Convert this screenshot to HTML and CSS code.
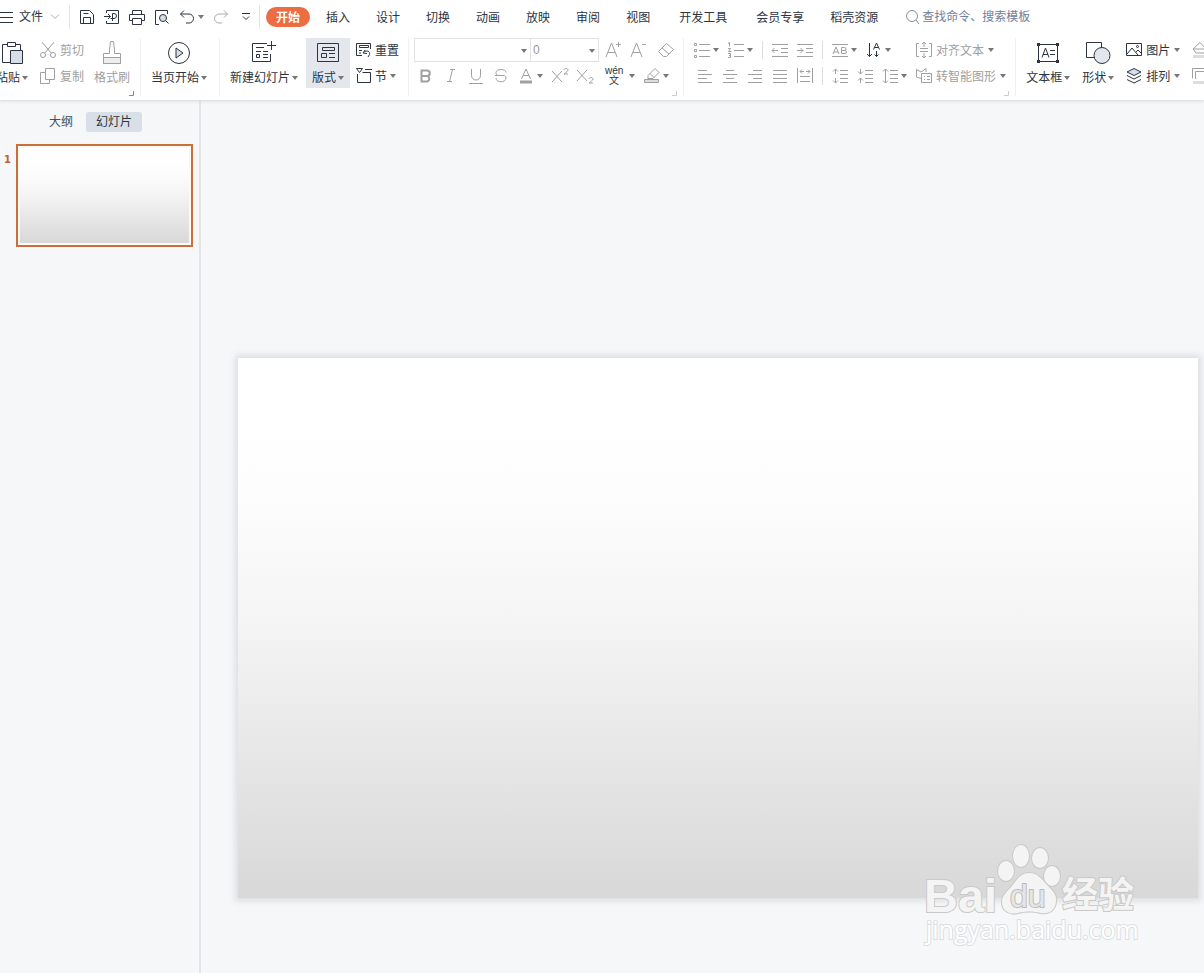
FILE: index.html
```
<!DOCTYPE html>
<html lang="zh-CN">
<head>
    <meta charset="UTF-8">
    <title>演示文稿</title>
    <link rel="stylesheet" href="styles.css">
</head>
<body>
    <!-- shared shapes -->
    <svg class="defs" width="0" height="0">
        <symbol id="caret" viewBox="0 0 6 4"><path d="M0 0h6L3 4z" fill="#777" stroke="none"/></symbol>
    </svg>

    <header>
        <nav class="menubar">
            <button class="file" aria-label="文件">
                <svg width="13" height="12"><path d="M0 1.5h13M0 6.500h13M0 11.500h13"/></svg>
                文件
                <svg class="light chev" width="10" height="6"><path d="M1 .5l4 4 4-4"/></svg>
            </button>
            <div class="quick">
                <button aria-label="保存"><svg width="16" height="16"><path d="M1.500 1.500h9l4 4v9h-13zM4.500 14.500v-6h7v6M4.500 4.500h5"/></svg></button>
                <button aria-label="输出为PDF"><svg width="16" height="16"><path d="M2.500 4V1.500h12v13h-12V12M0 7.500h6M4 5l2.500 2.500L4 10M8.500 12V4.500H10a2 2 0 0 1 0 5H6.500"/></svg></button>
                <button aria-label="打印"><svg width="16" height="16"><path d="M3.500 5V1.500h9V5M3.500 11.500h-3v-6h15v6h-3M3.500 9.500h9v6h-9z"/></svg></button>
                <button aria-label="打印预览"><svg width="16" height="16"><path d="M5 15.500H1.500v-14h12V5M11.500 11.500l3 3"/><circle cx="9" cy="9" r="3.500" fill="#d8dee6"/></svg></button>
                <button aria-label="撤销"><svg width="16" height="16"><path d="M5 1.500L1.500 5 5 8.500M1.500 5H10a4.500 4.500 0 0 1 0 9H7"/></svg><svg class="caret"><use href="#caret"/></svg></button>
                <button class="redo" aria-label="恢复"><svg class="light" width="16" height="16"><path d="M11 1.500L14.500 5 11 8.500M14.500 5H6a4.500 4.500 0 0 0 0 9h3"/></svg></button>
                <button class="more" aria-label="更多"><svg width="8" height="8"><path d="M0 .5h8M1 3.500l3 3 3-3"/></svg></button>
            </div>
            <div class="tabs">
                <button class="tab active">开始</button>
                <button class="tab">插入</button>
                <button class="tab">设计</button>
                <button class="tab">切换</button>
                <button class="tab">动画</button>
                <button class="tab">放映</button>
                <button class="tab">审阅</button>
                <button class="tab">视图</button>
                <button class="tab wide">开发工具</button>
                <button class="tab">会员专享</button>
                <button class="tab">稻壳资源</button>
            </div>
            <label class="search">
                <svg width="16" height="16"><circle cx="7" cy="7" r="5.500"/><path d="M11 11l3 4"/></svg>
                <input type="text" placeholder="查找命令、搜索模板">
            </label>
        </nav>

        <div class="ribbon">
            <div class="group clipboard">
                <button class="big">
                    <svg width="24" height="24"><path d="M8 3.500H2.500v18H10M16 3.500h4.500V9M7.500 1.500h8v4h-8z"/><path d="M10.500 9.500h12v13h-12z" fill="#d8dee6"/></svg>
                    <span>粘贴<svg class="caret"><use href="#caret"/></svg></span>
                </button>
                <div class="col">
                    <button class="small off"><svg width="16" height="16"><path d="M2 0l9.500 11.500M14 0L4.500 11.500"/><circle cx="3" cy="13" r="2.500"/><circle cx="13" cy="13" r="2.500"/></svg><span>剪切</span></button>
                    <button class="small off"><svg width="16" height="16"><path d="M5.500.5h9v11h-9zM5 4.500H.5v11h9V12"/></svg><span>复制</span></button>
                </div>
                <button class="big off brush">
                    <svg width="24" height="24"><path d="M3.500 22.500v-10h6v-4l1-8h3l1 8v4h6v10z"/><path d="M3.500 16.500h17v6h-17z" fill="#eee"/></svg>
                    <span>格式刷</span>
                </button>
                <svg class="corner" width="5" height="5"><path d="M4.500 0v4.500H0"/></svg>
            </div>

            <div class="group play">
                <button class="big">
                    <svg width="24" height="24"><circle cx="12" cy="12" r="10.500"/><path d="M9 7l7 5-7 5z" fill="#d8dee6"/></svg>
                    <span>当页开始<svg class="caret"><use href="#caret"/></svg></span>
                </button>
            </div>

            <div class="group slides">
                <button class="big">
                    <svg width="24" height="24"><path d="M15 2.500H.5v18h18V13M19.500 0v9M15 4.500h9M4 6.500h8M4 10.500h5M4.500 13.500h3v3h-3zM11 10.500h5M11 13.500h5M11 16.500h5"/></svg>
                    <span>新建幻灯片<svg class="caret"><use href="#caret"/></svg></span>
                </button>
                <button class="big on">
                    <svg width="24" height="24"><path d="M1.500 2.500h21v18h-21zM6.500 6.500h12v3h-12zM5.500 12.500h5v4h-5zM13 12.500h6M13 16.500h6"/></svg>
                    <span>版式<svg class="caret"><use href="#caret"/></svg></span>
                </button>
                <div class="col tight">
                    <button class="small"><svg width="16" height="16"><path d="M6 13.500H.5v-12h14V7M3.500 3.500h9v2h-9zM3 8.500h3M3 11h2M9 8l-2 3 4 .5M7.500 10.500c3-3 7-1 6 2L12 15"/></svg><span>重置</span></button>
                    <button class="small"><svg width="16" height="16"><path d="M.5.500h6l-3 4zM9 1.500h7M1.500 6v8.500h13v-10h-8"/></svg><span>节</span><svg class="caret"><use href="#caret"/></svg></button>
                </div>
            </div>

            <div class="group font">
                <div class="col">
                    <div class="row combos">
                        <label class="combo name"><select aria-label="字体"><option></option></select><svg class="caret"><use href="#caret"/></svg></label>
                        <label class="combo size"><select aria-label="字号"><option>0</option></select><svg class="caret"><use href="#caret"/></svg></label>
                        <button class="off grow" aria-label="增大字号"><svg width="16" height="16"><path d="M0 15L5.500 1 11 15M2 10.500h7M10 2.500h5M12.500 0v5"/></svg></button>
                        <button class="off" aria-label="减小字号"><svg width="16" height="16"><path d="M0 15L5.500 1 11 15M2 10.500h7M11 2.500h4"/></svg></button>
                        <button class="off erase" aria-label="清除格式"><svg width="16" height="16"><path d="M.5 9.500l8-8 7 6-7 7h-3zM4 6l7 6"/></svg></button>
                    </div>
                    <div class="row styles">
                        <button class="off" aria-label="加粗"><svg width="16" height="16"><path d="M3.500 2.500H9a2.700 2.700 0 0 1 0 5.500H3.500zM3.500 8h6a3 3 0 0 1 0 5.500h-6z" stroke-width="2"/></svg></button>
                        <button class="off" aria-label="倾斜"><svg width="16" height="16"><path d="M7 1.500h5M4 13.500h5M9.500 1.500l-3 12"/></svg></button>
                        <button class="off" aria-label="下划线"><svg width="16" height="16"><path d="M3.500 1v6.500a4.500 4.500 0 0 0 9 0V1M1 15.500h14"/></svg></button>
                        <button class="off" aria-label="删除线"><svg width="16" height="16"><path d="M13 4.500c0-4-10-4-10 0 0 3 2 3 4 3M13 10c0 5-10 5-10 0M2 7.500h9c1 0 2 1 2 2.500"/></svg></button>
                        <button class="off" aria-label="字体颜色"><svg width="16" height="16"><path d="M3.500 11L8 1l4.500 10M5 7.500h6"/><path d="M2 14h12" stroke-width="3"/></svg><svg class="caret"><use href="#caret"/></svg></button>
                        <button class="off" aria-label="上标"><svg width="16" height="16"><path d="M0 3l10 11M10 3L0 14M12 2c0-2 4-2 4 0 0 1.500-2 2-4 4h4"/></svg></button>
                        <button class="off" aria-label="下标"><svg width="16" height="16"><path d="M0 2l10 11M10 2L0 13M12 11c0-2 4-2 4 0 0 1.500-2 2-4 4h4"/></svg></button>
                        <button class="pinyin" aria-label="拼音指南"><span>wén</span><span>文</span></button>
                        <svg class="caret"><use href="#caret"/></svg>
                        <button class="off" aria-label="突出显示"><svg width="16" height="16"><path d="M4 11V7.500l7-7 4 4-6 6H4M6 5.500l4 4"/><path d="M.5 11.500h14v3H.5z" fill="#ddd"/></svg><svg class="caret"><use href="#caret"/></svg></button>
                    </div>
                </div>
                <svg class="corner light" width="5" height="5"><path d="M4.500 0v4.500H0"/></svg>
            </div>

            <div class="group para">
                <div class="col">
                    <div class="row">
                        <button class="off" aria-label="项目符号"><svg width="16" height="16"><path d="M5 2.500h11M5 8.500h11M5 14.500h11M.5 1.500h2v2h-2zM.5 7.500h2v2h-2zM.5 13.500h2v2h-2z"/></svg><svg class="caret"><use href="#caret"/></svg></button>
                        <button class="off" aria-label="编号"><svg width="16" height="16"><path d="M6 2.500h10M6 8.500h10M6 14.500h10M0 1.500l1.500-1v4M0 6.500h2.500L.5 9.500h3M0 11.500h2.500v4H0M1 13.500h2"/></svg><svg class="caret"><use href="#caret"/></svg></button>
                        <i class="line"></i>
                        <button class="off" aria-label="减少缩进"><svg width="16" height="16"><path d="M0 2.500h16M9 6.500h7M9 10.500h7M0 14.500h16M0 8.500h6M2.500 6L0 8.500 2.500 11"/></svg></button>
                        <button class="off" aria-label="增加缩进"><svg width="16" height="16"><path d="M0 2.500h16M9 6.500h7M9 10.500h7M0 14.500h16M0 8.500h6M3.500 6L6 8.500 3.500 11"/></svg></button>
                    </div>
                    <div class="row aligns">
                        <button class="off" aria-label="左对齐"><svg width="16" height="16"><path d="M1 2.500h9M1 6.500h14M1 10.500h9M1 14.500h14"/></svg></button>
                        <button class="off" aria-label="居中"><svg width="16" height="16"><path d="M4 2.500h8M1 6.500h14M4 10.500h8M1 14.500h14"/></svg></button>
                        <button class="off" aria-label="右对齐"><svg width="16" height="16"><path d="M6 2.500h9M1 6.500h14M6 10.500h9M1 14.500h14"/></svg></button>
                        <button class="off" aria-label="两端对齐"><svg width="16" height="16"><path d="M1 2.500h14M1 6.500h14M1 10.500h14M1 14.500h14"/></svg></button>
                        <button class="off" aria-label="分散对齐"><svg width="16" height="16"><path d="M.5 0v15M15.500 0v15M3 8.500h10M3 13.500h10M3 3.500h4M9 3.500h4M5 1.500l-2 2 2 2M11 1.500l2 2-2 2"/></svg></button>
                    </div>
                </div>
                <div class="col lines">
                    <i class="line"></i>
                    <i class="line"></i>
                </div>
                <div class="col">
                    <div class="row">
                        <button class="off" aria-label="字符边框"><svg width="16" height="16"><path d="M0 2.500h16M0 14.500h16M1 12L4 5l3 7M2 10h4M9.500 5.500h3a1.500 1.500 0 0 1 0 3h-3zM9.500 8.500H13a1.500 1.500 0 0 1 0 3H9.500z"/></svg><svg class="caret"><use href="#caret"/></svg></button>
                        <button aria-label="文字方向"><svg width="16" height="16"><path d="M3.500 1v13.500M1 12l2.500 2.500L6 12M7.500 7.500L10.500 1l3 6.500M8.500 5.500h4M10.500 9v5.500M8.500 12.500l2 2 2-2"/></svg><svg class="caret"><use href="#caret"/></svg></button>
                    </div>
                    <div class="row">
                        <button class="off" aria-label="段前间距"><svg width="16" height="16"><path d="M8 2.500h8M8 6.500h8M8 10.500h8M8 14.500h8M3.500 6V1M1 3.500L3.500 1 6 3.500M3.500 10v5M1 12.500L3.500 15 6 12.500"/></svg></button>
                        <button class="off" aria-label="段后间距"><svg width="16" height="16"><path d="M8 2.500h8M8 6.500h8M8 10.500h8M8 14.500h8M3.500 1v5M1 3.500L3.500 6 6 3.500M3.500 15v-5M1 12.500L3.500 10 6 12.500"/></svg></button>
                        <button class="off" aria-label="行距"><svg width="16" height="16"><path d="M8 2.500h8M8 6.500h8M8 10.500h8M8 14.500h8M3.500 1v14M1 3.500L3.500 1 6 3.500M1 12.500L3.500 15 6 12.500"/></svg><svg class="caret"><use href="#caret"/></svg></button>
                    </div>
                </div>
                <div class="col last">
                    <button class="small off"><svg width="16" height="16"><path d="M3 1.500H.5v13H3M13 1.500h2.500v13H13M4 6.500h8M4 9.500h8M8 5V0M6 2l2-2 2 2M8 11v5M6 14l2 2 2-2"/></svg><span>对齐文本</span><svg class="caret"><use href="#caret"/></svg></button>
                    <button class="small off"><svg width="16" height="16"><path d="M5 10.500L.5 9V1.500L5 4l5-3.500V4M5.500 5.500h10v9h-10zM8 8.500h1M11 8.500h3M8 11.500h1M11 11.500h3"/></svg><span>转智能图形</span><svg class="caret"><use href="#caret"/></svg></button>
                </div>
                <svg class="corner light" width="5" height="5"><path d="M4.500 0v4.500H0"/></svg>
            </div>

            <div class="group insert">
                <button class="big">
                    <svg width="24" height="24"><path d="M2.500 3.500h19v17h-19zM6 16.500L9.500 7l3.500 9.500M7 13.500h5M14 9.500h5M14 13.500h5"/><path d="M1 2h3v3H1zM20 2h3v3h-3zM1 19h3v3H1zM20 19h3v3h-3z" fill="#2b3440" stroke="none"/></svg>
                    <span>文本框<svg class="caret"><use href="#caret"/></svg></span>
                </button>
                <button class="big">
                    <svg width="26" height="24"><path d="M1.500 1.500h15v15h-15z"/><circle cx="17" cy="14.500" r="8" fill="#e3e7ec"/></svg>
                    <span>形状<svg class="caret"><use href="#caret"/></svg></span>
                </button>
                <div class="col">
                    <button class="small"><svg width="16" height="16"><path d="M.5 1.500h15v12H.5zM1 12l5-6 6 7M10 10l2-2 3 3"/><circle cx="11.500" cy="4.500" r="1"/></svg><span>图片</span><svg class="caret"><use href="#caret"/></svg></button>
                    <button class="small"><svg width="16" height="16"><path d="M8 .5l7 3.500-7 3.500L1 4z" fill="#d8dee6"/><path d="M1 7.500L8 11l7-3.500M1 11.500L8 15l7-3.500"/></svg><span>排列</span><svg class="caret"><use href="#caret"/></svg></button>
                </div>
                <div class="col">
                    <button class="small off" aria-label="填充"><svg width="16" height="16"><path d="M1 7l7-6.500L14 7l-2 4H4zM1 7h13"/><path d="M1 14.500h14" stroke-width="3" stroke="#ddd"/></svg></button>
                    <button class="small off" aria-label="轮廓"><svg width="16" height="16"><path d="M.5 10.500V.5h15v10M3.500 11V3.500h9V11"/><path d="M1 14.500h14" stroke-width="3" stroke="#ddd"/></svg></button>
                </div>
            </div>
        </div>
    </header>

    <div class="workspace">
        <aside>
            <div class="views">
                <button class="view">大纲</button>
                <button class="view active">幻灯片</button>
            </div>
            <div class="thumb-row">
                <span class="num">1</span>
                <div class="thumb"><div class="paper"></div></div>
            </div>
        </aside>
        <main>
            <div class="slide paper"></div>
            <svg class="watermark" width="222" height="110" viewBox="0 0 222 110">
                <g class="brand">
                    <text class="bai" x="2" y="69">Bai</text>
                    <ellipse cx="84" cy="28" rx="8" ry="10"/>
                    <ellipse cx="99" cy="13" rx="8" ry="11"/>
                    <ellipse cx="118" cy="15" rx="8" ry="10"/>
                    <ellipse cx="130" cy="33" rx="8" ry="10"/>
                    <path d="M107 30c10 0 14 8 19 13 6 6 9 10 8 16-1 10-9 12-15 11-8-2-15-2-23 0-7 2-16-1-16-11 0-7 5-10 10-16 5-7 9-13 17-13z"/>
                    <text class="du" x="88" y="64">du</text>
                    <text class="cn" x="140" y="65">经验</text>
                </g>
                <text class="url" x="4" y="96">jingyan.baidu.com</text>
            </svg>
        </main>
    </div>
</body>
</html>
```
FILE: styles.css
```
* {
    box-sizing: border-box;
}
body {
    margin: 0;
    min-height: 100vh;
    display: flex;
    flex-direction: column;
    overflow: hidden;
    background-color: #f5f7f9;
    color: #2b3440;
    font-family: "Liberation Sans", "Noto Sans CJK SC", sans-serif;
    font-size: 12px;
    line-height: 16px;
}
.defs {
    position: absolute;
}
svg {
    display: block;
    flex: none;
    fill: none;
    stroke: #2b3440;
    overflow: visible;
}
.light {
    stroke: #aaa;
}
.caret {
    width: 6px;
    height: 4px;
}
button {
    display: flex;
    align-items: center;
    flex: none;
    padding: 0;
    border: none;
    background: none;
    color: inherit;
    font: inherit;
    white-space: nowrap;
    cursor: pointer;
}
.off {
    color: #a0a0a0;
}
.off svg {
    stroke: #a0a0a0;
}

/* menu bar */
header {
    position: relative;
    background-color: white;
    box-shadow: 0 1px 3px #d5d8dc;
}
.menubar {
    display: flex;
    align-items: center;
    height: 34px;
}
.file {
    gap: 6px;
    height: 24px;
    padding-right: 9px;
    border-right: 1px solid #e4e4e4;
}
.chev {
    margin-left: 1px;
}
.quick {
    display: flex;
    align-items: center;
    gap: 9px;
    height: 24px;
    padding: 0 9px;
    border-right: 1px solid #e4e4e4;
}
.quick .caret {
    margin-left: 3px;
}
.more {
    margin-left: 4px;
}
.tabs {
    display: flex;
    align-items: center;
    padding-left: 6px;
}
.tab {
    height: 20px;
    padding: 2px 13px 0;
}
.tab.active {
    margin-right: 3px;
    padding: 2px 10px 0;
    border-radius: 10px;
    background-color: #ed6c42;
    color: white;
    font-weight: bold;
}
.tab.wide {
    margin: 0 3px;
}
.search {
    display: flex;
    align-items: center;
    margin-left: 14px;
}
.search svg {
    stroke: #8290a3;
}
.search input {
    width: 130px;
    padding: 0 0 0 1px;
    border: none;
    outline: none;
    background: none;
    font: inherit;
}
.search input::placeholder {
    color: #71809a;
}

/* ribbon */
.ribbon {
    display: flex;
    padding: 4px 0;
}
.group {
    position: relative;
    display: flex;
    align-items: flex-start;
    flex: none;
    height: 58px;
    border-right: 1px solid #f0f0f0;
}
.big {
    flex-direction: column;
    gap: 5px;
    height: 50px;
    padding-top: 3px;
}
.big span {
    display: flex;
    align-items: center;
    gap: 2px;
}
.big.on {
    padding: 3px 6px 0;
    background-color: #e4e8ee;
}
.col {
    display: flex;
    flex-direction: column;
    gap: 2px;
}
.row {
    display: flex;
    align-items: center;
    gap: 9px;
    height: 24px;
}
.row button {
    gap: 3px;
}
.small {
    gap: 4px;
    height: 24px;
}
.small span {
    padding-top: 2px;
}
.corner {
    position: absolute;
    right: 6px;
    bottom: 0;
    stroke: #888;
}
.corner.light {
    stroke: #ccc;
}
.clipboard {
    gap: 12px;
    margin-left: -4px;
    padding-right: 10px;
}
.brush {
    margin-left: -2px;
}
.play {
    padding: 0 12px 0 10px;
}
.slides {
    gap: 8px;
    padding: 0 9px 0 10px;
}
.tight {
    margin-left: -2px;
}
.tight .small {
    gap: 3px;
}
.font {
    padding: 0 9px 0 5px;
}
.combos {
    gap: 0;
}
.combo {
    position: relative;
    border: 1px solid #e2e2e2;
}
.combo.name {
    width: 117px;
}
.combo.size {
    width: 69px;
    margin-left: -1px;
}
.combo select {
    display: block;
    width: 100%;
    height: 22px;
    padding: 0 2px;
    border: none;
    appearance: none;
    background: none;
    color: #999;
    font: inherit;
}
.combo .caret {
    position: absolute;
    top: 10px;
    right: 3px;
}
.grow {
    margin: 0 9px 0 7px;
}
.erase {
    margin-left: 11px;
}
.styles {
    padding-left: 4px;
}
.styles .pinyin {
    flex-direction: column;
    gap: 0;
    width: 24px;
    font-size: 10px;
    line-height: 10px;
}
.pinyin + .caret {
    margin-left: -6px;
}
.para {
    gap: 9px;
    padding: 0 9px 0 10px;
}
.aligns {
    padding-left: 3px;
}
.line {
    width: 1px;
    height: 18px;
    background-color: #dedede;
}
.lines {
    gap: 8px;
    padding-top: 3px;
}
.insert {
    gap: 12px;
    padding-left: 10px;
    border-right: none;
}

/* slides panel and canvas */
.workspace {
    display: flex;
    flex: 1;
}
aside {
    flex: none;
    width: 201px;
    padding: 12px 6px 0 4px;
    border-right: 2px solid #e2e4e8;
}
.views {
    display: flex;
    justify-content: center;
    gap: 3px;
    padding-right: 16px;
}
.view {
    height: 20px;
    padding: 0 10px;
    border-radius: 3px;
    color: #454e5a;
}
.view.active {
    background-color: #d9dfe6;
    color: #2b3440;
}
.thumb-row {
    display: flex;
    margin-top: 12px;
}
.num {
    width: 12px;
    padding-top: 8px;
    color: #c0602a;
    font: bold 10px/16px "DejaVu Sans", sans-serif;
}
.thumb {
    flex: 1;
    padding: 2px;
    border: 2px solid #c96f3b;
    background-color: #fdf8f2;
}
.paper {
    aspect-ratio: 16 / 9;
    background: linear-gradient(#fff 10%, #fdfdfd 25%, #f5f5f5 48%, #d9d9d9 98%);
}
main {
    position: relative;
    display: flex;
    align-items: flex-end;
    flex: 1;
    padding: 0 6px 75px 37px;
}
.slide {
    flex: 1;
    box-shadow: 0 0 6px 3px #dcdee0;
}

.watermark {
    position: absolute;
    right: 60px;
    bottom: 20px;
}
.watermark text, .watermark ellipse, .watermark path {
    fill: #f4f4f4;
    stroke: #c9c9c9;
    stroke-width: 2px;
    paint-order: stroke;
}
.brand text {
    font-weight: bold;
}
.bai {
    font-size: 47px;
}
.watermark .du {
    font-size: 32px;
    font-weight: normal;
    fill: #e6e6e6;
    stroke: #bcbcbc;
}
.cn {
    font-size: 36px;
}
.watermark .url {
    fill: #fff;
    stroke: #dcdfe2;
    font-family: "Open Sans", sans-serif;
    font-size: 25px;
}
```
